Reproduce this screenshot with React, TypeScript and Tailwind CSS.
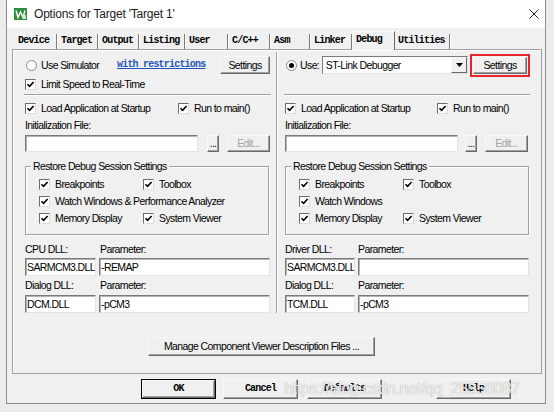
import type { ReactNode } from "react";

const mono = "font-['Liberation_Mono','Courier_New',monospace] font-bold text-[10px] tracking-[-0.8px]";

const tabs = [
	{ name: "Device", w: "w-[43px]" },
	{ name: "Target", w: "w-[41px]" },
	{ name: "Output", w: "w-[41px]" },
	{ name: "Listing", w: "w-[46px]" },
	{ name: "User", w: "w-[43px]" },
	{ name: "C/C++", w: "w-[42px]" },
	{ name: "Asm", w: "w-[40px]" },
	{ name: "Linker", w: "w-[42px]" },
];

function Check({ label, className = "" }: { label: string; className?: string }) {
	return (
		<div className={`flex items-center ${className}`}>
			<span className="w-[11px] h-[11px] shrink-0 bg-white border border-[#6d6d6d] border-r-[#dcdcdc] border-b-[#dcdcdc] flex items-center justify-center">
				<svg width="9" height="9" viewBox="0 0 9 9">
					<path d="M1.5 4.2 L3.6 6.4 L7.6 2" stroke="#000" strokeWidth="1.6" fill="none" />
				</svg>
			</span>
			<span className="ml-[5px] whitespace-nowrap">{label}</span>
		</div>
	);
}

function Radio({ on }: { on: boolean }) {
	return (
		<span className="w-[11px] h-[11px] shrink-0 rounded-full bg-white border border-[#8a8a8a] flex items-center justify-center">
			{on && <span className="w-[5px] h-[5px] rounded-full bg-black" />}
		</span>
	);
}

function Field({ value = "", className = "" }: { value?: string; className?: string }) {
	return (
		<div
			className={`h-full bg-white border border-[#7a7a7a] border-r-[#e3e3e3] border-b-[#e3e3e3] shadow-[inset_1px_1px_0_#b4b4b4] pl-[1px] flex items-center whitespace-nowrap overflow-hidden ${className}`}
		>
			{value}
		</div>
	);
}

function Btn({
	children,
	className = "",
	disabled = false,
}: {
	children: ReactNode;
	className?: string;
	disabled?: boolean;
}) {
	return (
		<div
			className={`flex items-center justify-center bg-[#f0f0f0] border border-[#f8f8f8] border-r-[#696969] border-b-[#696969] shadow-[inset_-1px_-1px_0_#a0a0a0] whitespace-nowrap ${
				disabled ? "text-[#a3a3a3]" : ""
			} ${className}`}
		>
			{children}
		</div>
	);
}

function Separator() {
	return <div className="mt-[1px] h-[2px] border-t border-[#a0a0a0] border-b border-b-white" />;
}

function Group({ children, className = "" }: { children: ReactNode; className?: string }) {
	return (
		<div
			className={`relative h-[69px] border border-[#a0a0a0] shadow-[inset_1px_1px_0_#fff,1px_1px_0_#fff] pt-[9px] ${className}`}
		>
			<span className="absolute -top-[8px] left-[5px] px-[2px] bg-[#f0f0f0] leading-[14px]">
				Restore Debug Session Settings
			</span>
			{children}
		</div>
	);
}

function Column({
	right,
	dll,
	param,
	dialogDll,
}: {
	right: boolean;
	dll: [string, string];
	param: string;
	dialogDll: string;
}) {
	return (
		<div className="flex flex-col">
			{/* Top row */}
			{right ? (
				<div className="h-[18px] flex items-center">
					<span className="ml-[2px]">
						<Radio on />
					</span>
					<span className="ml-[3px] w-[22px]">Use:</span>
					<div className="w-[148px] h-[18px] bg-white border border-[#7a7a7a] border-r-[#e3e3e3] border-b-[#e3e3e3] flex items-center">
						<span className="pl-[3px] flex-1">ST-Link Debugger</span>
						<span className="w-[16px] h-[16px] bg-[#f0f0f0] border border-[#f8f8f8] border-r-[#696969] border-b-[#696969] flex items-center justify-center">
							<svg width="7" height="4" viewBox="0 0 7 4">
								<path d="M0 0 H7 L3.5 4 Z" fill="#000" />
							</svg>
						</span>
					</div>
					<div className="ml-[2px] w-[60px] h-[23px] shrink-0 border-2 border-[#e8242b] p-[1px] flex">
						<Btn className="w-[54px] h-[17px]">Settings</Btn>
					</div>
				</div>
			) : (
				<div className="h-[18px] flex items-center">
					<span className="ml-[2px]">
						<Radio on={false} />
					</span>
					<span className="ml-[4px] w-[76px]">Use Simulator</span>
					<span className={`${mono} text-[#1f56b8] underline`}>with restrictions</span>
					<Btn className="ml-auto mr-[1px] w-[50px] h-[18px]">Settings</Btn>
				</div>
			)}
			<div className="mt-[1px] h-[18px] flex items-center pl-[1px]">
				{!right && <Check label="Limit Speed to Real-Time" />}
			</div>
			<Separator />
			<div className="mt-[3px] h-[18px] flex items-center pl-[1px]">
				<Check label="Load Application at Startup" className={right ? "w-[152px]" : "w-[153px]"} />
				<Check label="Run to main()" />
			</div>
			<div className="h-[16px] flex items-center pl-[1px]">Initialization File:</div>
			<div className="mt-[2px] h-[17px] flex pl-[1px]">
				<Field className="w-[173px]" />
				<Btn className={`${right ? "ml-[7px]" : "ml-[9px]"} w-[12px] h-[17px] text-[10px]`}>...</Btn>
				<Btn disabled className="ml-[8px] w-[43px] h-[17px]">
					Edit...
				</Btn>
			</div>
			<Group className="mt-[14px] ml-[1px] w-[244px]">
				<div className="h-[17px] flex items-center pl-[13px]">
					<Check label="Breakpoints" className="w-[104px]" />
					<Check label="Toolbox" />
				</div>
				<div className="h-[17px] flex items-center pl-[13px]">
					<Check label={right ? "Watch Windows" : "Watch Windows & Performance Analyzer"} />
				</div>
				<div className="h-[17px] flex items-center pl-[13px]">
					<Check label="Memory Display" className="w-[104px]" />
					<Check label="System Viewer" />
				</div>
			</Group>
			<div className="mt-[6px] h-[16px] flex items-center pl-[1px]">
				<span className={right ? "w-[73px]" : "w-[75px]"}>{dll[0]}</span>
				<span>Parameter:</span>
			</div>
			<div className="mt-[1px] h-[18px] flex pl-[1px]">
				<Field value={dll[1]} className={right ? "w-[70px]" : "w-[71px]"} />
				<Field value={param} className={right ? "ml-[3px] w-[171px]" : "ml-[3px] w-[171px]"} />
			</div>
			<div className="mt-[1px] h-[16px] flex items-center pl-[1px]">
				<span className={right ? "w-[73px]" : "w-[75px]"}>Dialog DLL:</span>
				<span>Parameter:</span>
			</div>
			<div className="mt-[2px] h-[18px] flex pl-[1px]">
				<Field value={dialogDll} className={right ? "w-[70px]" : "w-[71px]"} />
				<Field value="-pCM3" className={right ? "ml-[3px] w-[171px]" : "ml-[3px] w-[171px]"} />
			</div>
		</div>
	);
}

export default function App() {
	return (
		<div className="relative w-[554px] h-[412px] overflow-hidden bg-[#ececec] font-['Liberation_Sans',Arial,sans-serif] text-[10.5px] tracking-[-0.6px] leading-none text-black">
			<div className="ml-[6px] w-[540px] h-[404px] flex flex-col bg-[#f0f0f0] border-l border-r border-b border-[#8c8c8c]">
				{/* Title bar */}
				<div className="h-[28px] bg-white flex items-center pl-[7px] pr-[6px]">
					<svg width="13" height="12" viewBox="0 0 13 12">
						<rect width="13" height="12" fill="#2f8c3c" />
						<path d="M2 2.5 L4 9.5 L6.5 4 L9 9.5 L11 2.5" stroke="#fff" strokeWidth="1.4" fill="none" />
						<rect x="9" y="7" width="3" height="4" fill="#c9e8c9" />
					</svg>
					<span className="ml-[7px] text-[12px] tracking-[-0.2px] text-[#1a1a1a]">
						Options for Target 'Target 1'
					</span>
					<svg className="ml-auto" width="10" height="10" viewBox="0 0 10 10">
						<path d="M0.5 0.5 L9.5 9.5 M9.5 0.5 L0.5 9.5" stroke="#222" strokeWidth="1" />
					</svg>
				</div>

				{/* Tabs */}
				<div className={`h-[21px] flex items-end pl-[7px] ${mono}`}>
					{tabs.map(t => (
						<div
							key={t.name}
							className={`${t.w} h-[15px] pl-[4px] pb-[2px] flex items-center border-r border-[#7a7a7a] shadow-[1px_0_0_#fff]`}
						>
							{t.name}
						</div>
					))}
					<div className="relative z-10 -mb-[1px] w-[43px] h-[19px] pl-[3px] pb-[3px] flex items-center bg-[#f0f0f0] border border-b-0 border-[#fafafa] border-r-[#696969]">
						Debug
					</div>
					<div className="w-[55px] h-[15px] pl-[3px] pb-[2px] flex items-center border-r border-[#7a7a7a] shadow-[1px_0_0_#fff]">
						Utilities
					</div>
				</div>

				{/* Panel */}
				<div className="ml-[5px] w-[530px] h-[325px] border border-[#a0a0a0] shadow-[inset_1px_1px_0_#fff] pl-[11px] pt-[6px] flex flex-col">
					<div className="flex">
						<div className="w-[247px]">
							<Column right={false} dll={["CPU DLL:", "SARMCM3.DLL"]} param="-REMAP" dialogDll="DCM.DLL" />
						</div>
						<div className="ml-[5px] -mt-[4px] w-[2px] border-l border-[#a0a0a0] border-r border-r-white" />
						<div className="ml-[6px] w-[246px]">
							<Column right dll={["Driver DLL:", "SARMCM3.DLL"]} param="" dialogDll="TCM.DLL" />
						</div>
					</div>
					<Btn className="mt-[24px] ml-[124px] w-[227px] h-[19px]">Manage Component Viewer Description Files ...</Btn>
				</div>

				{/* Bottom buttons */}
				<div className={`mt-[5px] h-[20px] flex pl-[134px] ${mono}`}>
					<div className="w-[75px] h-[20px] border border-black flex">
						<Btn className="flex-1">OK</Btn>
					</div>
					<Btn className="ml-[7px] w-[75px] h-[20px]">Cancel</Btn>
					<Btn className="ml-[9px] w-[75px] h-[20px]">Defaults</Btn>
					<Btn className="ml-[54px] w-[75px] h-[20px]">Help</Btn>
				</div>
			</div>

			{/* Watermark */}
			<span className="absolute left-[284px] top-[381px] text-[16px] tracking-[-0.3px] text-white/85 [text-shadow:0_0_1px_#8a8a8a]">
				https://blog.csdn.net/qq_25556087
			</span>
		</div>
	);
}
